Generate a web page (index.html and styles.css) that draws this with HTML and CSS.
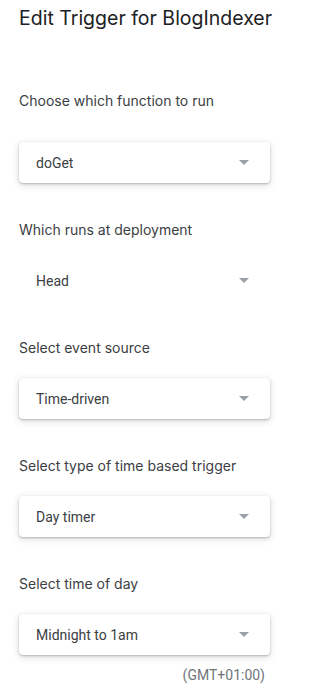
FILE: index.html
```html
<!DOCTYPE html>
<html lang="en">
<head>
    <meta charset="UTF-8">
    <meta name="viewport" content="width=device-width, initial-scale=1.0">
    <title>Edit Trigger for BlogIndexer</title>

    <link rel="stylesheet" href="styles.css">
</head>
<body>
    <div class="dialog">
        <h1>Edit Trigger for BlogIndexer</h1>

        <div class="field field-first">
            <div class="field-label">Choose which function to run</div>
            <div class="select">
                <span>doGet</span>
                <span class="arrow"></span>
            </div>
        </div>

        <div class="field">
            <div class="field-label">Which runs at deployment</div>
            <div class="select select-flat">
                <span>Head</span>
                <span class="arrow"></span>
            </div>
        </div>

        <div class="field">
            <div class="field-label">Select event source</div>
            <div class="select">
                <span>Time-driven</span>
                <span class="arrow"></span>
            </div>
        </div>

        <div class="field">
            <div class="field-label">Select type of time based trigger</div>
            <div class="select">
                <span>Day timer</span>
                <span class="arrow"></span>
            </div>
        </div>

        <div class="field">
            <div class="field-label">Select time of day</div>
            <div class="select">
                <span>Midnight to 1am</span>
                <span class="arrow"></span>
            </div>
            <div class="timezone">(GMT+01:00)</div>
        </div>
    </div>
</body>
</html>
```

FILE: styles.css
```css
body {
    margin: 0;
    padding: 0;
    background: #ffffff;
    font-family: Roboto, Arial, sans-serif;
    color: #3c4043;
}

.dialog {
    padding: 4px 0 0 19px;
}

h1 {
    margin: 0;
    font-family: Inter, Roboto, sans-serif;
    font-size: 19.5px;
    font-weight: 400;
    line-height: 28px;
    white-space: nowrap;
    color: #202124;
}

.field {
    width: 251px;
    margin-top: 37px;
}

.field-first {
    margin-top: 59px;
}

.field-first .field-label {
    margin-bottom: 31px;
}

.field-label {
    font-family: Inter, Roboto, sans-serif;
    font-size: 14px;
    line-height: 20px;
    margin-bottom: 20px;
    white-space: nowrap;
    color: #3c4043;
}

.select {
    height: 41px;
    box-sizing: border-box;
    padding: 0 21px 0 17px;
    display: flex;
    align-items: center;
    justify-content: space-between;
    border-radius: 4px;
    background: #ffffff;
    font-size: 14px;
    color: #3c4043;
    box-shadow: 0 1px 2px rgba(60, 64, 67, 0.3), 0 2px 6px 1px rgba(60, 64, 67, 0.15);
}

.select-flat {
    box-shadow: none;
}

.arrow {
    width: 0;
    height: 0;
    border-left: 5px solid transparent;
    border-right: 5px solid transparent;
    border-top: 5px solid #9aa0a6;
}

.timezone {
    text-align: right;
    padding-right: 5px;
    margin-top: 10px;
    font-size: 14px;
    line-height: 20px;
    color: #70757a;
}
```
